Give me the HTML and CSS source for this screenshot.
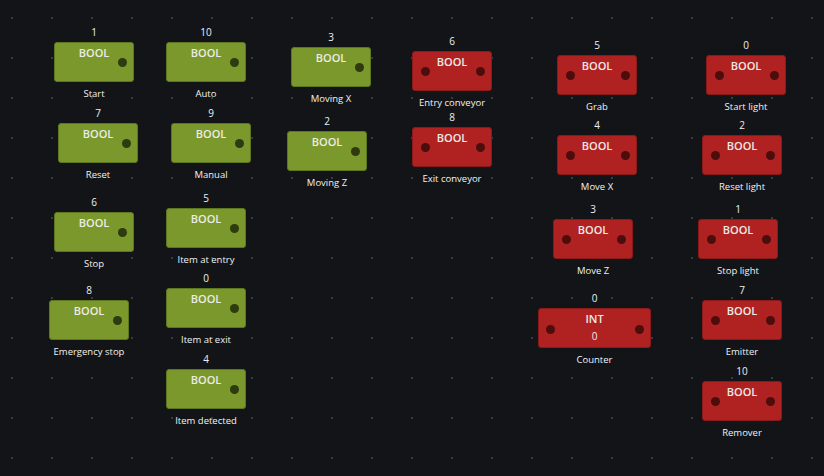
FILE: index.html
```html
<!DOCTYPE html>
<html>
<head>
<meta charset="utf-8">
<link rel="stylesheet" href="styles.css">
</head>
<body>
<div class="canvas">
  <div class="node" style="left:54px;top:22px"><div class="num">1</div><div class="box green"><div class="type">BOOL</div><span class="port out"></span></div><div class="label">Start</div></div>
  <div class="node" style="left:166px;top:22px"><div class="num">10</div><div class="box green"><div class="type">BOOL</div><span class="port out"></span></div><div class="label">Auto</div></div>
  <div class="node" style="left:58px;top:103px"><div class="num">7</div><div class="box green"><div class="type">BOOL</div><span class="port out"></span></div><div class="label">Reset</div></div>
  <div class="node" style="left:171px;top:103px"><div class="num">9</div><div class="box green"><div class="type">BOOL</div><span class="port out"></span></div><div class="label">Manual</div></div>
  <div class="node" style="left:54px;top:192px"><div class="num">6</div><div class="box green"><div class="type">BOOL</div><span class="port out"></span></div><div class="label">Stop</div></div>
  <div class="node" style="left:166px;top:188px"><div class="num">5</div><div class="box green"><div class="type">BOOL</div><span class="port out"></span></div><div class="label">Item at entry</div></div>
  <div class="node" style="left:49px;top:280px"><div class="num">8</div><div class="box green"><div class="type">BOOL</div><span class="port out"></span></div><div class="label">Emergency stop</div></div>
  <div class="node" style="left:166px;top:268px"><div class="num">0</div><div class="box green"><div class="type">BOOL</div><span class="port out"></span></div><div class="label">Item at exit</div></div>
  <div class="node" style="left:166px;top:349px"><div class="num">4</div><div class="box green"><div class="type">BOOL</div><span class="port out"></span></div><div class="label">Item detected</div></div>
  <div class="node" style="left:291px;top:27px"><div class="num">3</div><div class="box green"><div class="type">BOOL</div><span class="port out"></span></div><div class="label">Moving X</div></div>
  <div class="node" style="left:287px;top:111px"><div class="num">2</div><div class="box green"><div class="type">BOOL</div><span class="port out"></span></div><div class="label">Moving Z</div></div>

  <div class="node" style="left:412px;top:31px"><div class="num">6</div><div class="box red"><div class="type">BOOL</div><span class="port in"></span><span class="port out"></span></div><div class="label">Entry conveyor</div></div>
  <div class="node" style="left:412px;top:107px"><div class="num">8</div><div class="box red"><div class="type">BOOL</div><span class="port in"></span><span class="port out"></span></div><div class="label">Exit conveyor</div></div>
  <div class="node" style="left:557px;top:35px"><div class="num">5</div><div class="box red"><div class="type">BOOL</div><span class="port in"></span><span class="port out"></span></div><div class="label">Grab</div></div>
  <div class="node" style="left:557px;top:115px"><div class="num">4</div><div class="box red"><div class="type">BOOL</div><span class="port in"></span><span class="port out"></span></div><div class="label">Move X</div></div>
  <div class="node" style="left:553px;top:199px"><div class="num">3</div><div class="box red"><div class="type">BOOL</div><span class="port in"></span><span class="port out"></span></div><div class="label">Move Z</div></div>
  <div class="node wide" style="left:538px;top:288px"><div class="num">0</div><div class="box red"><div class="type">INT</div><div class="value">0</div><span class="port in"></span><span class="port out"></span></div><div class="label">Counter</div></div>
  <div class="node" style="left:706px;top:35px"><div class="num">0</div><div class="box red"><div class="type">BOOL</div><span class="port in"></span><span class="port out"></span></div><div class="label">Start light</div></div>
  <div class="node" style="left:702px;top:115px"><div class="num">2</div><div class="box red"><div class="type">BOOL</div><span class="port in"></span><span class="port out"></span></div><div class="label">Reset light</div></div>
  <div class="node" style="left:698px;top:199px"><div class="num">1</div><div class="box red"><div class="type">BOOL</div><span class="port in"></span><span class="port out"></span></div><div class="label">Stop light</div></div>
  <div class="node" style="left:702px;top:280px"><div class="num">7</div><div class="box red"><div class="type">BOOL</div><span class="port in"></span><span class="port out"></span></div><div class="label">Emitter</div></div>
  <div class="node" style="left:702px;top:361px"><div class="num">10</div><div class="box red"><div class="type">BOOL</div><span class="port in"></span><span class="port out"></span></div><div class="label">Remover</div></div>
</div>
</body>
</html>
```
FILE: styles.css
```css
* { box-sizing: border-box; }
html, body {
  margin: 0;
  padding: 0;
  width: 824px;
  height: 476px;
  overflow: hidden;
  background: #131417;
}
.canvas {
  position: relative;
  width: 824px;
  height: 476px;
  background-color: #131417;
  background-image: radial-gradient(circle, #3a3c42 0.7px, transparent 1.2px);
  background-size: 40px 40px;
  background-position: -8px -2px;
  font-family: "Open Sans", "Noto Sans", sans-serif;
  color: #ececec;
}
.node {
  position: absolute;
  width: 80px;
  display: flex;
  flex-direction: column;
  align-items: center;
}
.node.wide { width: 113px; }
.num {
  height: 20px;
  line-height: 20px;
  font-size: 10px;
  color: #eaf0f4;
}
.label {
  height: 24px;
  line-height: 24px;
  font-size: 9.5px;
  white-space: nowrap;
  color: #f2f2f2;
}
.box {
  position: relative;
  width: 100%;
  height: 40px;
  border-radius: 3px;
  border: 1px solid;
  padding-top: 3px;
  text-align: center;
}
.box.green {
  background: #7b982c;
  border-color: #5f7620;
}
.box.red {
  background: #b02222;
  border-color: #8a1919;
}
.type {
  line-height: 14px;
  font-size: 11px;
  font-weight: 600;
  color: #ecece6;
}
.value {
  margin-top: 3px;
  line-height: 14px;
  font-size: 10px;
  color: #ececec;
}
.port {
  position: absolute;
  top: 15px;
  width: 9px;
  height: 9px;
  border-radius: 50%;
}
.green .port { background: #2e3a0f; }
.red .port { background: #4c0d0d; }
.port.out { right: 6px; }
.port.in { left: 7.5px; }
.wide .port.in { left: 6.5px; }
.wide .port.out { right: 6.5px; }
.wide .port { top: 16px; }
```
